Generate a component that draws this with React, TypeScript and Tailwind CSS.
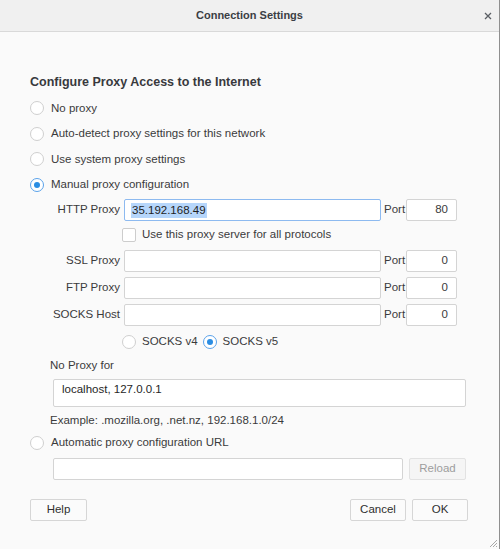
const Radio = ({ checked = false }: { checked?: boolean }) => (
  <span
    className={`flex h-[14px] w-[14px] shrink-0 items-center justify-center rounded-full border bg-white ${
      checked ? "border-[#5aa2ea]" : "border-[#cfcfcf]"
    }`}
  >
    {checked && <span className="h-[6px] w-[6px] rounded-full bg-[#2a8de3]" />}
  </span>
);

const Field = ({
  className = "",
  value = "",
  focused = false,
}: {
  className?: string;
  value?: string;
  focused?: boolean;
}) => (
  <div
    className={`flex h-[22px] items-center rounded-[2px] border bg-white ${
      focused ? "border-[#8dbaf0]" : "border-[#d4d4d4]"
    } ${className}`}
  >
    {value && (
      <span className="ml-[6px] bg-[#b6d6fb] px-[1px] leading-[15px] text-[#1e1e1e]">{value}</span>
    )}
  </div>
);

const ProxyRow = ({
  label,
  value,
  port,
  focused,
  className = "",
}: {
  label: string;
  value?: string;
  port: string;
  focused?: boolean;
  className?: string;
}) => (
  <div className={`flex h-[22px] items-center ${className}`}>
    <span className="w-[70px] text-right">{label}</span>
    <Field className="ml-[4px] w-[257px]" value={value} focused={focused} />
    <span className="ml-[3px] w-[22px]">Port</span>
    <div className="flex h-[22px] w-[51px] items-center justify-end rounded-[2px] border border-[#d4d4d4] bg-white pr-[8px]">
      {port}
    </div>
  </div>
);

const Button = ({ label, className = "", disabled = false }: { label: string; className?: string; disabled?: boolean }) => (
  <div
    className={`flex h-[22px] items-center justify-center rounded-[2px] border ${
      disabled ? "border-[#e2e2e2] bg-[#f5f5f5] text-[#9d9d9d]" : "border-[#d6d6d6] bg-[#fbfbfb] text-[#2f2f2f]"
    } ${className}`}
  >
    {label}
  </div>
);

export default function App() {
  return (
    <div
      className="relative h-[549px] w-[500px] overflow-hidden border-r border-[#8f8f8f] bg-[#fafafa] text-[11.5px] text-[#3a3a3c]"
      style={{ fontFamily: '"Liberation Sans", Arial, sans-serif' }}
    >
      {/* title bar */}
      <div className="relative flex h-[32px] items-center justify-center border-b border-[#d9d9d9] bg-[#f0f0f0]">
        <span className="text-[11px] font-bold text-[#3b3e44]">Connection Settings</span>
        <svg className="absolute right-[7px] top-[12px]" width="8" height="8" viewBox="0 0 8 8">
          <path d="M1 1L7 7M7 1L1 7" stroke="#5a5e64" strokeWidth="1.3" />
        </svg>
      </div>

      <div className="flex flex-col pl-[30px]">
        <div className="mt-[40px] flex h-[20px] items-center text-[12.5px] font-bold text-[#38393d]">
          Configure Proxy Access to the Internet
        </div>

        <div className="mt-[3.5px] flex flex-col">
          {[
            ["No proxy", false],
            ["Auto-detect proxy settings for this network", false],
            ["Use system proxy settings", false],
            ["Manual proxy configuration", true],
          ].map(([label, on]) => (
            <div key={label as string} className="flex h-[25.5px] items-center gap-[7px]">
              <Radio checked={on as boolean} />
              <span>{label as string}</span>
            </div>
          ))}
        </div>

        <div className="flex flex-col pl-[20px]">
          <ProxyRow className="mt-[1.5px]" label="HTTP Proxy" value="35.192.168.49" port="80" focused />
          <div className="mt-[7px] flex h-[14px] items-center pl-[72px]">
            <span className="h-[14px] w-[14px] rounded-[2px] border border-[#cdcdcd] bg-white" />
            <span className="ml-[6px]">Use this proxy server for all protocols</span>
          </div>
          <ProxyRow className="mt-[8px]" label="SSL Proxy" port="0" />
          <ProxyRow className="mt-[5px]" label="FTP Proxy" port="0" />
          <ProxyRow className="mt-[5px]" label="SOCKS Host" port="0" />
          <div className="mt-[9px] flex h-[14px] items-center pl-[72px]">
            <Radio />
            <span className="ml-[6px]">SOCKS v4</span>
            <span className="ml-[5px]">
              <Radio checked />
            </span>
            <span className="ml-[6px]">SOCKS v5</span>
          </div>

          <div className="mt-[9px] flex h-[16px] items-center">No Proxy for</div>
          <div className="ml-[3px] mt-[5px] h-[28px] w-[413px] rounded-[2px] border border-[#d4d4d4] bg-white pl-[8px] pt-[2px] leading-[15px] text-[#262626]">
            localhost, 127.0.0.1
          </div>
          <div className="mt-[6px] flex h-[16px] items-center">Example: .mozilla.org, .net.nz, 192.168.1.0/24</div>
        </div>

        <div className="mt-[7px] flex h-[14px] items-center gap-[7px]">
          <Radio />
          <span>Automatic proxy configuration URL</span>
        </div>

        <div className="mt-[8px] flex h-[22px] items-center pl-[23px]">
          <Field className="w-[350px]" />
          <Button label="Reload" disabled className="ml-[6px] w-[57px]" />
        </div>

        <div className="mt-[19px] flex h-[22px] items-center pr-[31px]">
          <Button label="Help" className="w-[57px]" />
          <div className="flex-1" />
          <Button label="Cancel" className="w-[56px]" />
          <Button label="OK" className="ml-[6px] w-[56px]" />
        </div>
      </div>

      {/* resize grip */}
      <svg className="absolute bottom-[1px] right-[1px]" width="10" height="10" viewBox="0 0 10 10">
        <path d="M9 2L2 9M9 5L5 9M9 8L8 9" stroke="#a8a8a8" strokeWidth="1" />
      </svg>
    </div>
  );
}
